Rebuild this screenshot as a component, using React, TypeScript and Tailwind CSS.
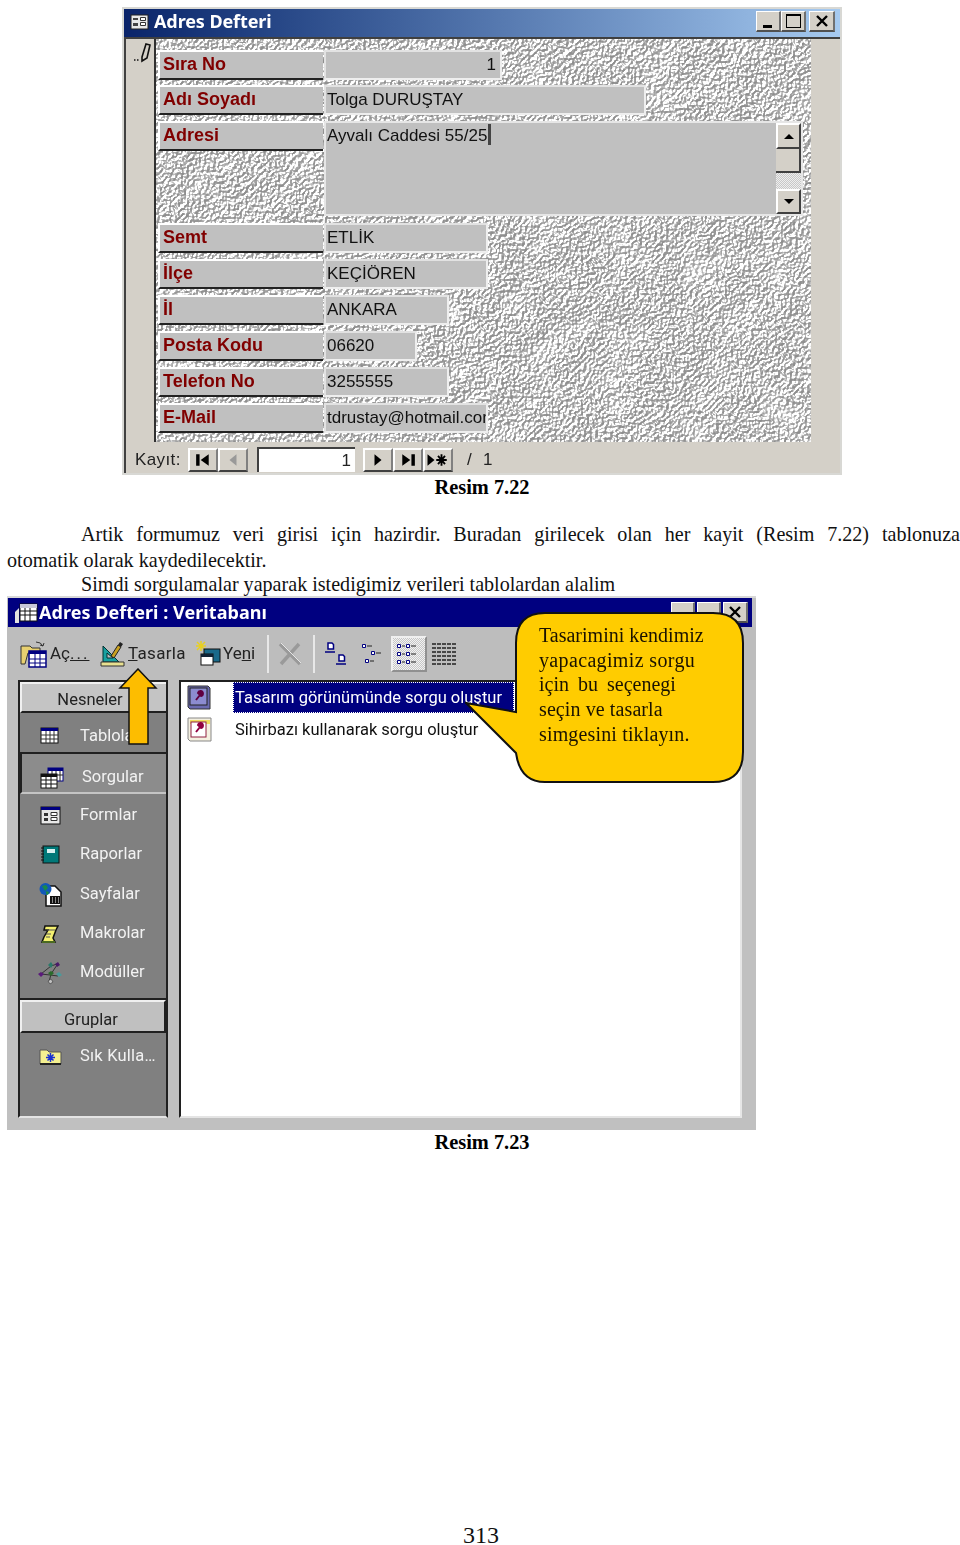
import type { ReactNode } from 'react'

const serif = "font-['Liberation_Serif',serif]"

const formRows = [
  { label: 'Sıra No', value: '1', field: 'w-[178px] text-right pr-[4px]', box: 'mt-[11px] h-[30px]' },
  { label: 'Adı Soyadı', value: 'Tolga DURUŞTAY', field: 'w-[322px]', box: 'mt-[5px] h-[30px]' },
  { label: 'Semt', value: 'ETLİK', field: 'w-[164px]', box: 'mt-[7px] h-[30px]' },
  { label: 'İlçe', value: 'KEÇİÖREN', field: 'w-[164px]', box: 'mt-[6px] h-[30px]' },
  { label: 'İl', value: 'ANKARA', field: 'w-[125px]', box: 'mt-[6px] h-[30px]' },
  { label: 'Posta Kodu', value: '06620', field: 'w-[93px]', box: 'mt-[6px] h-[30px]' },
  { label: 'Telefon No', value: '3255555', field: 'w-[125px]', box: 'mt-[6px] h-[30px]' },
  { label: 'E-Mail', value: 'tdrustay@hotmail.com', field: 'w-[164px] overflow-hidden whitespace-nowrap', box: 'mt-[6px] h-[30px]' },
]

const objectRows = [
  { name: 'Tablolar', icon: <TableIcon />, row: 'h-[41px] pt-[7px] border-b-2 border-[#202020]' },
  { name: 'Sorgular', icon: <QueryIcon />, row: 'h-[40px] pt-[9px] bg-[#8c8c8c] border-b-2 border-[#c4c4c4] border-l-2 border-l-[#202020]' },
  { name: 'Formlar', icon: <FormIcon />, row: 'h-[39px] pt-[4px]' },
  { name: 'Raporlar', icon: <ReportIcon />, row: 'h-[39px] pt-[4px]' },
  { name: 'Sayfalar', icon: <PageIcon />, row: 'h-[40px] pt-[4px]' },
  { name: 'Makrolar', icon: <MacroIcon />, row: 'h-[39px] pt-[4px]' },
  { name: 'Modüller', icon: <ModuleIcon />, row: 'h-[39px] pt-[4px]' },
]

function TableIcon() {
  return (
    <svg width="20" height="18" viewBox="0 0 20 18">
      <rect x="1" y="1" width="17" height="15" fill="#fff" stroke="#111" />
      <rect x="1" y="1" width="17" height="3" fill="#000080" />
      <path d="M1 8h17M1 12h17M6 4v12M10 4v12M14 4v12" stroke="#333" />
    </svg>
  )
}

function QueryIcon() {
  return (
    <svg width="24" height="22" viewBox="0 0 24 22">
      <rect x="8" y="1" width="15" height="13" fill="#fff" stroke="#000080" />
      <rect x="8" y="1" width="15" height="3" fill="#000080" />
      <path d="M12 4v10M16 4v10M20 4v10M8 8h15" stroke="#222" />
      <rect x="1" y="7" width="16" height="14" fill="#fff" stroke="#111" />
      <rect x="1" y="7" width="16" height="3" fill="#111" />
      <path d="M1 13h16M1 17h16M6 10v11M11 10v11" stroke="#111" />
    </svg>
  )
}

function FormIcon() {
  return (
    <svg width="21" height="19" viewBox="0 0 21 19">
      <rect x="1" y="1" width="19" height="17" fill="#e8e8e8" stroke="#111" />
      <rect x="1" y="1" width="19" height="3" fill="#000080" />
      <path d="M4 7h4v3H4zM4 12h4v3H4z" fill="#333" />
      <path d="M11 6.500h6v3h-6zM11 11.500h6v3h-6z" fill="#fff" stroke="#333" />
    </svg>
  )
}

function ReportIcon() {
  return (
    <svg width="20" height="20" viewBox="0 0 20 20">
      <rect x="3" y="1" width="16" height="17" fill="#007878" stroke="#111" />
      <rect x="7" y="4" width="8" height="4" fill="#d8f0f0" />
      <path d="M1 3h3M1 6h3M1 9h3M1 12h3M1 15h3" stroke="#111" />
    </svg>
  )
}

function PageIcon() {
  return (
    <svg width="25" height="25" viewBox="0 0 25 25">
      <path d="M8 4h9l6 6v14H8z" fill="#fff" stroke="#111" strokeWidth="1.500" />
      <circle cx="7.500" cy="7" r="6" fill="#1258b8" />
      <path d="M4 4l4-1 2 3-3 3zM8 9l3 1-1 3-2-1z" fill="#1a8a48" />
      <rect x="12" y="14" width="10" height="8" fill="#111" />
      <path d="M14 16h1M17 16h1M20 16h1M14 18h1M17 18h1M20 18h1M14 20h1M17 20h1M20 20h1" stroke="#fff" />
    </svg>
  )
}

function MacroIcon() {
  return (
    <svg width="20" height="20" viewBox="0 0 20 20">
      <path d="M5 2h13l-2 4-3 8 2 4H2l2-5 4-7H4z" fill="#f4f070" stroke="#111" strokeWidth="1.500" />
      <path d="M7 6h8M6 10h5M6 13h4" stroke="#555" />
      <path d="M2 18h13" stroke="#4a6a20" strokeWidth="2" />
    </svg>
  )
}

function ModuleIcon() {
  return (
    <svg width="26" height="24" viewBox="0 0 26 24">
      <path d="M4 13L14 5 20 3M4 13l9 1 8 1M12 21l2-8 6-9" stroke="#333" fill="none" />
      <path d="M1 13l3-2 3 2-3 3z" fill="#5a1a7a" />
      <path d="M11 4l3-3 2 3-2 3z" fill="#2a7a6a" />
      <path d="M18 3l3-2 2 3-3 2z" fill="#4a1a6a" />
      <path d="M11 12l3-2 3 2-3 3z" fill="#2a6a2a" />
      <path d="M19 13l3-2 3 3-3 2z" fill="#4a9a9a" />
      <path d="M11 20l3-2 2 3-3 2z" fill="#c0c0c0" stroke="#222" strokeWidth=".5" />
    </svg>
  )
}

function FolderIcon() {
  return (
    <svg width="23" height="19" viewBox="0 0 23 19">
      <path d="M1 3h7l2 2h12v12H1z" fill="#f4f090" stroke="#555" />
      <rect x="1" y="16" width="21" height="2" fill="#222" />
      <path d="M11.500 6v9M7 10.500h9M8.500 7.500l6 6M14.500 7.500l-6 6" stroke="#1830d0" strokeWidth="1.500" />
    </svg>
  )
}

function NavButton({ children, off }: { children: ReactNode; off?: boolean }) {
  return (
    <div className={`h-[24px] w-[30px] flex items-center justify-center bg-[#d4d0c8] border-t-2 border-l-2 border-t-white border-l-white border-b-2 border-r-2 border-b-[#404040] border-r-[#808080] ${off ? 'text-[#999]' : 'text-black'}`}>
      {children}
    </div>
  )
}

function CaptionButton({ children, w }: { children: ReactNode; w: string }) {
  return (
    <div className={`${w} h-[21px] flex items-center justify-center bg-[#d4d0c8] border-t border-l border-t-white border-l-white border-b-2 border-r-2 border-b-[#505050] border-r-[#707070]`}>
      {children}
    </div>
  )
}

function Field({ className, children }: { className: string; children: ReactNode }) {
  return (
    <div className={`h-full bg-[#c0c0c0] border-2 border-[#e2e2e2] border-b-[#eeeeee] border-r-[#eeeeee] px-[1px] text-[17px] leading-[26px] text-[#111] ${className}`}>
      {children}
    </div>
  )
}

function Label({ children }: { children: ReactNode }) {
  return (
    <div className="w-[165px] h-[30px] shrink-0 bg-[#c0c0c0] border-t-2 border-l-2 border-white border-b-2 border-b-[#222] pl-[3px] text-[18px] leading-[25px] font-bold text-[#800000]">
      {children}
    </div>
  )
}

function AddressForm() {
  return (
    <div className="ml-[122px] mt-[7px] w-[720px] h-[468px] border-2 border-[#d8d8d4] bg-[#d4d0c8] flex flex-col font-['Liberation_Sans',sans-serif] blur-[0.35px]">
      <div className="h-[28px] shrink-0 bg-gradient-to-r from-[#0a246a] to-[#a6caf0] flex items-center pl-[6px] pr-[5px] pb-[3px]">
        <svg width="19" height="16" viewBox="0 0 19 16">
          <rect x="1" y="1" width="17" height="14" fill="#e8e8e8" stroke="#222" />
          <path d="M3 4h5v2H3zM3 9h5v3H3z" fill="#444" />
          <path d="M10.500 3.500h5v3h-5zM10.500 8.500h5v3h-5z" fill="#fff" stroke="#333" />
        </svg>
        <span className="ml-[5px] text-[18px] font-bold tracking-[-0.1px] text-white font-['Noto_Sans',sans-serif]">Adres Defteri</span>
        <div className="ml-auto flex items-center">
          <CaptionButton w="w-[25px]">
            <div className="mt-[10px] mr-[2px] w-[9px] h-[3px] bg-black" />
          </CaptionButton>
          <CaptionButton w="w-[25px]">
            <div className="w-[15px] h-[14px] border border-t-2 border-black" />
          </CaptionButton>
          <div className="w-[3px]" />
          <CaptionButton w="w-[26px]">
            <svg width="14" height="12" viewBox="0 0 14 12"><path d="M2 1l10 10M12 1L2 11" stroke="#000" strokeWidth="2.400" /></svg>
          </CaptionButton>
        </div>
      </div>
      <div className="h-[405px] shrink-0 flex border-t-2 border-l-2 border-[#404040]">
        <div className="w-[30px] shrink-0 pl-[7px] pt-[3px] border-r-2 border-[#303030]">
          <svg width="20" height="22" viewBox="0 0 20 22">
            <path d="M9 15L13 2l4 1-3 13-5 3z" fill="none" stroke="#111" strokeWidth="1.600" />
            <path d="M1 18h1.500M4 18h1.500" stroke="#111" strokeWidth="1.300" />
          </svg>
        </div>
        <div className="relative w-[655px] shrink-0 overflow-hidden bg-[#c0c0c0]">
          <svg className="absolute inset-0" width="655" height="403">
            <filter id="stucco" x="0" y="0" width="100%" height="100%" colorInterpolationFilters="sRGB">
              <feTurbulence type="fractalNoise" baseFrequency="0.34" numOctaves="2" seed="7" result="fine" />
              <feTurbulence type="fractalNoise" baseFrequency="0.025" numOctaves="2" seed="3" result="broad" />
              <feComposite in="fine" in2="broad" operator="arithmetic" k1="2" k2="0.300" result="height" />
              <feDiffuseLighting in="height" surfaceScale="3.800" lightingColor="#fff" diffuseConstant="0.950">
                <feDistantLight azimuth="225" elevation="52" />
              </feDiffuseLighting>
              <feComponentTransfer>
                <feFuncR type="table" tableValues="0.56 0.6 0.66 0.76 1 1" />
                <feFuncG type="table" tableValues="0.56 0.6 0.66 0.76 1 1" />
                <feFuncB type="table" tableValues="0.56 0.6 0.66 0.76 1 1" />
              </feComponentTransfer>
            </filter>
            <rect width="655" height="403" filter="url(#stucco)" />
          </svg>
          <div className="relative pl-[2px] flex flex-col">
            {formRows.slice(0, 2).map((r) => (
              <div key={r.label} className={`flex ${r.box}`}>
                <Label>{r.label}</Label>
                <div className="w-[1px]" />
                <Field className={r.field}>{r.value}</Field>
              </div>
            ))}
            <div className="mt-[6px] flex h-[95px]">
              <Label>Adresi</Label>
              <div className="w-[1px]" />
              <div className="w-[479px] h-full bg-[#c0c0c0] border-2 border-[#e6e6e6] flex text-[17px] leading-[26px] text-[#111]">
                <div className="flex-1 px-[1px]">
                  Ayvalı Caddesi 55/25<span className="inline-block w-[3px] h-[21px] ml-[1px] align-[-4px] bg-[#444]" />
                </div>
                <div className="w-[25px] flex flex-col">
                  <div className="h-[26px] flex items-center justify-center bg-[#d4d0c8] border-t-2 border-l-2 border-white border-b-2 border-r-2 border-b-[#404040] border-r-[#404040]">
                    <div className="w-0 h-0 border-x-[5px] border-x-transparent border-b-[5px] border-b-black" />
                  </div>
                  <div className="h-[24px] bg-[#d4d0c8] border-b-2 border-r-2 border-[#404040]" />
                  <div className="flex-1 bg-[repeating-conic-gradient(#eeeeee_0_25%,#c8c8c8_0_50%)] bg-[length:2px_2px]" />
                  <div className="h-[25px] flex items-center justify-center bg-[#d4d0c8] border-t-2 border-l-2 border-white border-b-2 border-r-2 border-b-[#404040] border-r-[#404040]">
                    <div className="w-0 h-0 border-x-[5px] border-x-transparent border-t-[5px] border-t-black" />
                  </div>
                </div>
              </div>
            </div>
            {formRows.slice(2).map((r) => (
              <div key={r.label} className={`flex ${r.box}`}>
                <Label>{r.label}</Label>
                <div className="w-[1px]" />
                <Field className={r.field}>{r.value}</Field>
              </div>
            ))}
          </div>
        </div>
      </div>
      <div className="flex-1 flex items-center border-l-2 border-[#404040] text-[#222] text-[17px] pl-[9px] pt-[4px] bg-[#d4d0c8]">
        <span className="w-[53px] tracking-[0.4px]">Kayıt:</span>
        <NavButton>
          <svg width="16" height="14" viewBox="0 0 14 12"><path d="M1 1h3v10H1zM12 1v10L5 6z" fill="currentColor" /></svg>
        </NavButton>
        <NavButton off>
          <svg width="12" height="14" viewBox="0 0 10 12"><path d="M8 1v10L2 6z" fill="currentColor" /></svg>
        </NavButton>
        <div className="ml-[9px] w-[98px] h-[25px] bg-white border-t-2 border-l-2 border-[#404040] text-right pr-[4px] text-[17px] leading-[24px]">1</div>
        <div className="ml-[8px] flex">
          <NavButton>
            <svg width="12" height="14" viewBox="0 0 10 12"><path d="M2 1v10l6-5z" fill="currentColor" /></svg>
          </NavButton>
          <NavButton>
            <svg width="16" height="14" viewBox="0 0 14 12"><path d="M2 1v10l7-5zM10 1h3v10h-3z" fill="currentColor" /></svg>
          </NavButton>
          <NavButton>
            <svg width="24" height="14" viewBox="0 0 20 12"><path d="M1 1v10l6-5z" fill="currentColor" /><path d="M13 1v10M8.500 6h9M10 2.500l6 7M16 2.500l-6 7" stroke="currentColor" strokeWidth="1.600" /></svg>
          </NavButton>
        </div>
        <span className="ml-[14px] w-[16px]">/</span>
        <span>1</span>
      </div>
    </div>
  )
}

function Toolbar() {
  return (
    <div className="h-[53px] shrink-0 bg-[#bdbdbd] flex items-center pl-[13px] text-[17px] text-[#222] font-['Roboto',sans-serif]">
      <svg width="28" height="28" viewBox="0 0 28 28">
        <path d="M1 6h9l2 2h8v5H8l-3 11H1z" fill="#e8d070" stroke="#333" />
        <path d="M16 2q5 0 7 4M23 6l1-3M23 6l-3-1" fill="none" stroke="#333" />
        <rect x="9" y="11" width="17" height="16" fill="#fff" stroke="#000080" strokeWidth="1.500" />
        <rect x="9" y="11" width="17" height="3" fill="#000080" />
        <path d="M15 14v13M20 14v13M9 19h17M9 23h17" stroke="#000080" />
      </svg>
      <span className="ml-[2px] w-[48px] whitespace-nowrap">Aç<span className="underline tracking-[2px]">...</span></span>
      <svg className="ml-[1px]" width="26" height="28" viewBox="0 0 26 28">
        <path d="M4 6v16h16z M8 13v5h6z" fill="#17a0a0" fillRule="evenodd" stroke="#003030" />
        <path d="M2 22h23v4H2z" fill="#e8e090" stroke="#333" />
        <path d="M12 16l7-11 3 2-7 11z" fill="#c8a020" stroke="#222" />
        <path d="M19 5l2-3 3 2-2 3z" fill="#222" />
      </svg>
      <span className="ml-[3px] w-[55px] tracking-[0.3px]"><span className="underline">T</span>asarla</span>
      <svg className="ml-[12px]" width="27" height="26" viewBox="0 0 27 26">
        <path d="M6 0v10M1 5h10M2 1l8 8M10 1l-8 8" stroke="#e8d020" strokeWidth="1.500" />
        <rect x="9" y="8" width="16" height="13" fill="#1a6a8a" stroke="#111" />
        <rect x="6" y="13" width="12" height="11" fill="#fff" stroke="#111" />
        <path d="M6 13h12v3H6z" fill="#123" />
      </svg>
      <span className="ml-[1px] w-[33px]">Ye<span className="underline">n</span>i</span>
      <div className="ml-[11px] w-[2px] h-[38px] bg-[#e8e8e8]" />
      <svg className="ml-[8px]" width="26" height="26" viewBox="0 0 26 26">
        <path d="M3 3l20 20M22 3L4 23" stroke="#9a9a9a" strokeWidth="3.500" />
        <path d="M4 2l20 20" stroke="#e6e6e6" strokeWidth="1" />
      </svg>
      <div className="ml-[10px] w-[2px] h-[38px] bg-[#e8e8e8]" />
      <svg className="ml-[8px]" width="26" height="28" viewBox="0 0 26 28">
        <path d="M5 3h4l1.500 1.500V9H5zM16 15h4l1.500 1.500V21H16z" fill="#fff" stroke="#000080" strokeWidth="1.500" />
        <path d="M2 12h10M13 24h10" stroke="#000080" strokeWidth="1.500" />
      </svg>
      <svg className="ml-[11px]" width="26" height="26" viewBox="0 0 26 26">
        <path d="M2.500 3.500h3v3h-3zM11.500 10.500h3v3h-3zM5.500 18.500h3v3h-3z" fill="#fff" stroke="#000080" />
        <path d="M7 5h5M16 12h5M10 20h4" stroke="#222" />
      </svg>
      <div className="ml-[5px] w-[36px] h-[36px] border-t-2 border-l-2 border-[#f0f0f0] border-b-2 border-r-2 border-b-[#909090] border-r-[#909090] flex items-center justify-center bg-[repeating-conic-gradient(#f2f2f2_0_25%,#c6c6c6_0_50%)] bg-[length:2px_2px]">
        <svg width="26" height="26" viewBox="0 0 26 26">
          <path d="M1.500 3.500h3v3h-3zM10.500 3.500h3v3h-3zM1.500 11.500h3v3h-3zM10.500 11.500h3v3h-3zM1.500 19.500h3v3h-3zM10.500 19.500h3v3h-3z" fill="#fff" stroke="#000080" />
          <path d="M6 5h3M15 5h5M6 13h3M15 13h5M6 21h3M15 21h5" stroke="#222" />
        </svg>
      </div>
      <svg className="ml-[4px]" width="27" height="24" viewBox="0 0 27 24">
        <path d="M1 2h25M1 6h25M1 10h25M1 14h25M1 18h25M1 22h25" stroke="#222" strokeWidth="1.500" strokeDasharray="4 1" />
      </svg>
    </div>
  )
}

function ObjectsPanel() {
  return (
    <div className="w-[150px] h-[438px] shrink-0 flex flex-col bg-[#808080] border-2 border-[#202020] border-b-[#e4e4e4] text-[16.500px] text-[#f2f2f2] font-['Roboto',sans-serif]">
      <div className="h-[31px] shrink-0 bg-[#c4c4c4] border-t-2 border-l-2 border-[#f0f0f0] border-b-2 border-b-[#202020] text-center pr-[8px] leading-[31px] text-[#222]">Nesneler</div>
      {objectRows.map((o) => (
        <div key={o.name} className={`${o.row} shrink-0 flex items-center`}>
          <div className="w-[60px] flex justify-center">{o.icon}</div>
          <span>{o.name}</span>
        </div>
      ))}
      <div className="h-[10px] shrink-0 border-b-2 border-[#202020]" />
      <div className="h-[33px] shrink-0 bg-[#c0c0c0] border-t-2 border-l-2 border-[#f0f0f0] border-r-2 border-r-[#202020] border-b-2 border-b-[#202020] text-center leading-[35px] pr-[4px] text-[#222]">Gruplar</div>
      <div className="mt-[11px] flex items-center">
        <div className="w-[60px] flex justify-center"><FolderIcon /></div>
        <span className="tracking-[0.2px]">Sık Kulla…</span>
      </div>
    </div>
  )
}

function QueryList() {
  return (
    <div className="ml-[11px] w-[563px] h-[438px] shrink-0 bg-white border-l-2 border-t-2 border-[#202020] border-r-2 border-r-[#e6e6e6] border-b-2 border-b-[#e4e4e4] text-[16.500px] text-[#111] font-['Roboto',sans-serif]">
      <div className="flex items-center h-[31px]">
        <svg className="ml-[6px]" width="27" height="26" viewBox="0 0 27 26">
          <path d="M1 1h20l2 2v21H3l-2-2z" fill="#6a6ab0" stroke="#333" />
          <rect x="3" y="3" width="17" height="17" fill="#8c8cd0" stroke="#222" />
          <path d="M9 15l4-5M11 8a2.500 2.500 0 1 1 3 3z" stroke="#600040" strokeWidth="2" fill="#600040" />
        </svg>
        <span className="ml-[19px] px-[2px] bg-[#000080] text-white h-[31px] leading-[31px] w-[281px] whitespace-nowrap outline-1 outline-dotted outline-offset-[-1px] outline-white">Tasarım görünümünde sorgu oluştur</span>
      </div>
      <div className="flex items-center h-[31px] mt-[1px]">
        <svg className="ml-[6px]" width="27" height="26" viewBox="0 0 27 26">
          <path d="M1 1h23v23H3l-2-2z" fill="#f4f0e0" stroke="#888" />
          <rect x="3" y="3" width="20" height="4" fill="#f0e060" />
          <rect x="4" y="5" width="15" height="15" fill="#fff" stroke="#902040" />
          <path d="M9 15l4-5M11 8a2.500 2.500 0 1 1 3 3z" stroke="#900040" strokeWidth="2" fill="#900040" />
        </svg>
        <span className="ml-[19px] px-[2px] pt-[2px] whitespace-nowrap">Sihirbazı kullanarak sorgu oluştur</span>
      </div>
    </div>
  )
}

function DatabaseWindow() {
  return (
    <div className="relative ml-[7px] w-[749px] h-[534px] bg-[#c0c0c0] border-t-2 border-[#d8d8d8] flex flex-col blur-[0.35px]">
      <div className="h-[29px] shrink-0 ml-[1px] mr-[4px] bg-[#000080] flex items-center pl-[4px] pr-[4px]">
        <svg width="26" height="22" viewBox="0 0 26 22">
          <rect x="8" y="2" width="17" height="17" fill="#fff" stroke="#111" />
          <rect x="8" y="2" width="17" height="4" fill="#c8c8d8" />
          <path d="M8 9h17M8 13h17M13 6v13M18 6v13" stroke="#111" />
          <path d="M3 10l4-4v15H3z" fill="#e0e0e0" />
        </svg>
        <span className="ml-[1px] text-[18px] font-bold tracking-[0.05px] text-white font-['Noto_Sans',sans-serif]">Adres Defteri : Veritabanı</span>
        <div className="ml-auto flex gap-[2px]">
          <CaptionButton w="w-[24px]"><span /></CaptionButton>
          <CaptionButton w="w-[24px]"><span /></CaptionButton>
          <CaptionButton w="w-[25px]">
            <svg width="14" height="12" viewBox="0 0 14 12"><path d="M2 1l10 10M12 1L2 11" stroke="#000" strokeWidth="2.400" /></svg>
          </CaptionButton>
        </div>
      </div>
      <Toolbar />
      <div className="flex pl-[11px]">
        <ObjectsPanel />
        <QueryList />
      </div>

      {/* arrow over the toolbar */}
      <svg className="absolute left-[111px] top-[70px]" width="40" height="78" viewBox="0 0 40 78">
        <path d="M20 1L38 20H30V76H11V20H2z" fill="#fdbd00" stroke="#111" strokeWidth="1.500" />
      </svg>

      {/* callout over the list */}
      <div className="absolute left-[458px] top-[14px] w-[280px] h-[172px] text-[20px] leading-[24.500px] text-[#1a1200] font-['Liberation_Serif',serif]">
        <svg className="absolute inset-0" width="280" height="172" viewBox="0 0 280 172">
          <path d="M80 1H248Q278 1 278 31V140Q278 170 248 170H80Q55 170 51 141L1 91L51 100V31Q51 1 80 1Z" fill="#ffcc00" stroke="#111" strokeWidth="2" />
        </svg>
        <div className="relative pl-[74px] pt-[11px]">
          <div>Tasarimini kendimiz</div>
          <div className="tracking-[0.35px]">yapacagimiz sorgu</div>
          <div className="[word-spacing:4px]">için bu seçenegi</div>
          <div className="tracking-[0.1px]">seçin ve tasarla</div>
          <div className="mt-[1px] tracking-[0.15px]">simgesini tiklayın.</div>
        </div>
      </div>
    </div>
  )
}

export default function App() {
  return (
    <div className={`w-[960px] h-[1545px] bg-white text-black ${serif}`}>
      <AddressForm />
      <div className="h-[25px] text-center text-[20.400px] leading-[25px] font-bold pl-[4px]">Resim 7.22</div>
      <div className="mt-[21px] pl-[7px] text-[20.100px] text-[#111]">
        <p className="leading-[26px]">
          <span className="block text-justify indent-[74px] [text-align-last:justify]">Artik formumuz veri girisi için hazirdir. Buradan girilecek olan her kayit (Resim 7.22) tablonuza</span>
          <span className="block">otomatik olarak kaydedilecektir.</span>
        </p>
        <p className="indent-[74px] -mt-[1px] leading-[24px]">Simdi sorgulamalar yaparak istedigimiz verileri tablolardan alalim</p>
      </div>
      <DatabaseWindow />
      <div className="h-[24px] text-center text-[20.400px] leading-[24px] font-bold pl-[4px]">Resim 7.23</div>
      <div className="mt-[371px] text-center text-[24px] leading-[20px] text-[#111] pl-[2px]">313</div>
    </div>
  )
}
